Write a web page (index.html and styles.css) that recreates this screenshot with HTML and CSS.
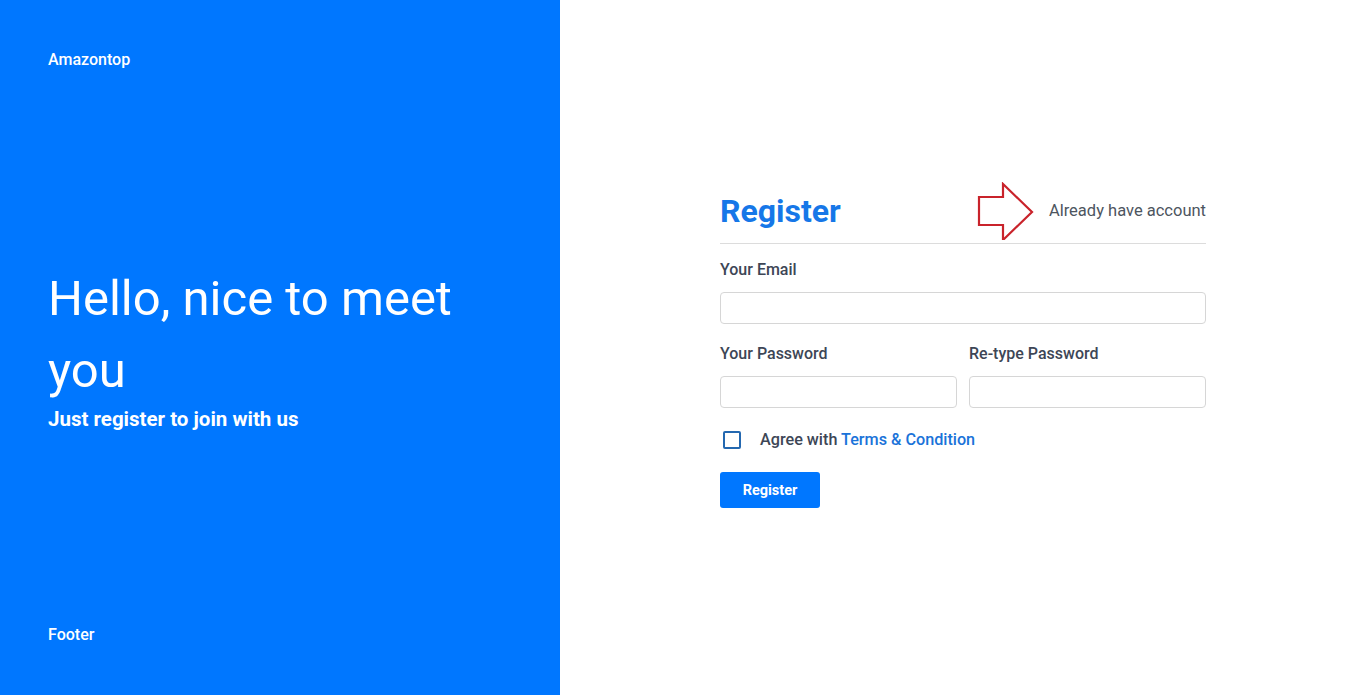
FILE: index.html
```html
<!DOCTYPE html>
<html>
<head>
<meta charset="utf-8">
<link rel="stylesheet" href="styles.css">
</head>
<body>
<div class="page">
  <aside class="side">
    <div class="brand">Amazontop</div>
    <div class="hero">
      <h1 class="hero-title">Hello, nice to meet you</h1>
      <p class="hero-sub">Just register to join with us</p>
    </div>
    <div class="footer">Footer</div>
  </aside>
  <main class="main">
    <form class="form">
      <div class="form-head">
        <h2 class="form-title">Register</h2>
        <div class="head-right">
          <svg class="arrow" width="58" height="58" viewBox="0 0 58 58">
            <path d="M2 15 H26 V2 L55 30 L26 58 V43 H2 Z" fill="none" stroke="#c9232b" stroke-width="2.2" stroke-linejoin="miter"/>
          </svg>
          <a class="login-link">Already have account</a>
        </div>
      </div>
      <div class="field">
        <label class="label">Your Email</label>
        <input class="input" type="text">
      </div>
      <div class="row">
        <div class="field">
          <label class="label">Your Password</label>
          <input class="input" type="password">
        </div>
        <div class="field">
          <label class="label">Re-type Password</label>
          <input class="input" type="password">
        </div>
      </div>
      <div class="agree">
        <span class="check"></span>
        <span class="agree-text">Agree with <span class="terms">Terms &amp; Condition</span></span>
      </div>
      <button class="btn" type="button">Register</button>
    </form>
  </main>
</div>
</body>
</html>
```
FILE: styles.css
```css
* { box-sizing: border-box; }
html, body { margin: 0; padding: 0; height: 100%; }
body { font-family: Roboto, "Liberation Sans", sans-serif; background: #fff; }
.page { display: flex; height: 695px; }
.side {
  width: 560px;
  flex: none;
  background: #0077ff;
  color: #fff;
  display: flex;
  flex-direction: column;
  padding: 50px 48px 50px;
}
.brand { font-size: 16px; font-weight: 500; line-height: 20px; }
.hero { flex: 1; display: flex; flex-direction: column; justify-content: center; padding-bottom: 2px; }
.hero-title { margin: 0; font-size: 49px; font-weight: 400; line-height: 72px; width: 440px; }
.hero-sub { margin: 0; font-size: 20.5px; font-weight: 700; line-height: 24px; }
.footer { font-size: 16px; font-weight: 500; line-height: 20px; }
.main { flex: 1; display: flex; justify-content: center; align-items: flex-start; padding-top: 181px; }
.form { width: 486px; }
.form-head {
  display: flex;
  justify-content: space-between;
  align-items: center;
  border-bottom: 1px solid #dcdcdc;
  padding-bottom: 3px;
  margin-bottom: 16px;
}
.form-title { margin: 0; font-size: 32px; font-weight: 700; color: #1677e8; line-height: 58px; }
.head-right { display: flex; align-items: center; gap: 14px; }
.arrow { display: block; margin-top: 1px; }
.login-link { font-size: 16.5px; color: #4d5560; }
.field { display: flex; flex-direction: column; flex: 1; }
.label { font-size: 16px; font-weight: 500; color: #3d4656; line-height: 20px; margin-bottom: 12px; }
.input {
  height: 32px;
  border: 1px solid #d6d6d6;
  border-radius: 4px;
  font-size: 14px;
  padding: 0 8px;
  width: 100%;
  margin-bottom: 20px;
}
.row { display: flex; gap: 12px; }
.agree { display: flex; align-items: center; gap: 19px; margin: 2px 0 22px 3px; }
.check { width: 18px; height: 18px; border: 2px solid #2468b0; border-radius: 2px; flex: none; }
.agree-text { font-size: 16.2px; font-weight: 500; color: #3d4656; line-height: 20px; }
.terms { color: #1a73d9; }
.btn {
  display: block;
  width: 100px;
  height: 36px;
  background: #0077ff;
  color: #fff;
  border: none;
  border-radius: 3px;
  font-family: Roboto, "Liberation Sans", sans-serif;
  font-size: 14.5px;
  font-weight: 700;
}
```
